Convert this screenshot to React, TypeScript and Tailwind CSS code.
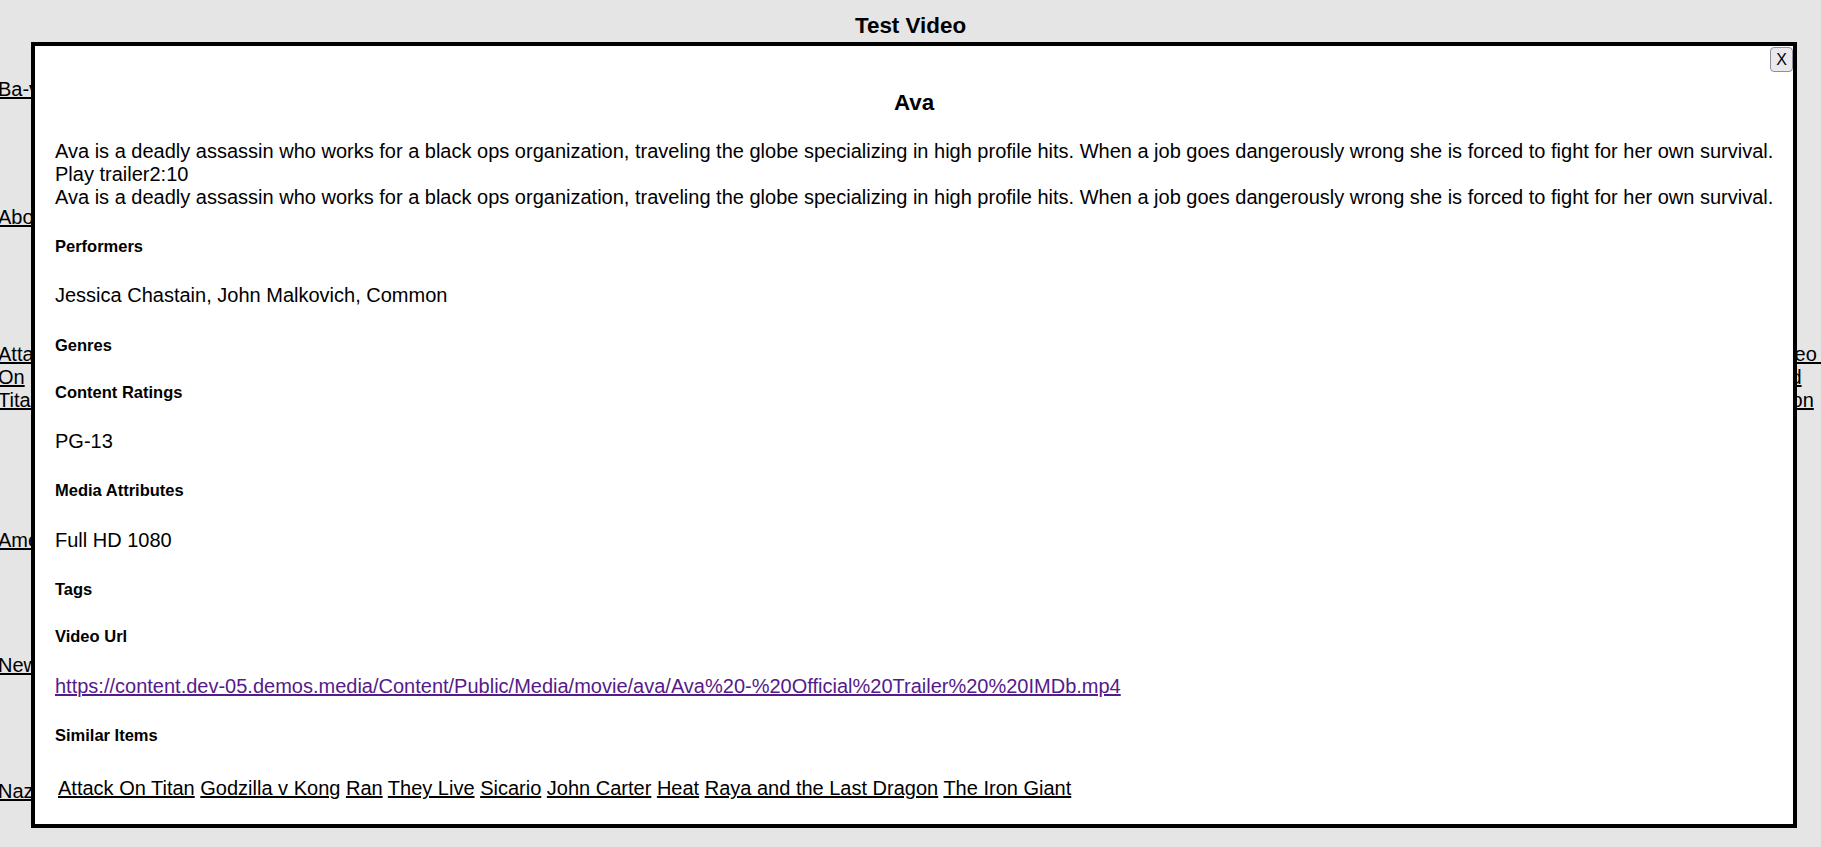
import React from "react";

const desc =
  "Ava is a deadly assassin who works for a black ops organization, traveling the globe specializing in high profile hits. When a job goes dangerously wrong she is forced to fight for her own survival.";

const similar = [
  "Attack On Titan",
  "Godzilla v Kong",
  "Ran",
  "They Live",
  "Sicario",
  "John Carter",
  "Heat",
  "Raya and the Last Dragon",
  "The Iron Giant",
];

function H5({ children }: { children: React.ReactNode }) {
  return <h5 className="text-[16.5px] leading-[19px] font-bold">{children}</h5>;
}

function Body({ children }: { children: React.ReactNode }) {
  return <p className="text-[20px] leading-[23px] whitespace-nowrap">{children}</p>;
}

export default function App() {
  return (
    <div
      className="relative w-full h-[847px] overflow-hidden bg-[#e5e5e5] text-black"
      style={{ fontFamily: '"Liberation Sans", Arial, sans-serif' }}
    >
      <h3 className="pt-[13px] text-center text-[22.4px] leading-[26px] font-bold">Test Video</h3>

      <div className="grid grid-cols-[60px_1fr_55px] text-[20px] leading-[23px]">
        <div className="-ml-[2px] flex flex-col items-start">
          <a href="#" className="mt-[39px] underline whitespace-nowrap">Ba-vaan</a>
          <a href="#" className="mt-[105.3px] underline whitespace-nowrap">About Time</a>
          <a href="#" className="mt-[113.7px] underline">Attack On Titan</a>
          <a href="#" className="mt-[116.6px] underline whitespace-nowrap">American Made</a>
          <a href="#" className="mt-[102.4px] underline whitespace-nowrap">New Mutants</a>
          <a href="#" className="mt-[103px] underline whitespace-nowrap">Nazi Hunters</a>
        </div>
        <div />
        <div className="flex flex-col items-start">
          <a href="#" className="mt-[304px] underline whitespace-nowrap">
            Video Game
            <br />
            And
            <br />
            Upon
          </a>
        </div>
      </div>

      <div className="fixed left-[31px] top-[42px] w-[1766px] h-[786px] border-4 border-black bg-white overflow-hidden">
        <button className="absolute top-[1px] right-0 h-[25px] px-[5px] text-[16px] leading-[20px] bg-[#e9e9ed] border border-[#8f8f9d] rounded-[4px] text-black">
          X
        </button>
        <div className="pl-[20px] pr-[4px] pt-[44px]">
          <h3 className="pr-[16px] text-center text-[22.4px] leading-[26px] font-bold">Ava</h3>
          <div className="mt-[24px]">
            <Body>{desc}</Body>
            <Body>Play trailer2:10</Body>
            <Body>{desc}</Body>
          </div>
          <div className="mt-[28px] flex flex-col gap-[28.3px]">
            <H5>Performers</H5>
            <Body>Jessica Chastain, John Malkovich, Common</Body>
            <H5>Genres</H5>
            <H5>Content Ratings</H5>
            <Body>PG-13</Body>
            <H5>Media Attributes</H5>
            <Body>Full HD 1080</Body>
            <H5>Tags</H5>
            <H5>Video Url</H5>
            <p className="text-[20px] leading-[23px]">
              <a href="#" className="underline text-[#551a8b]">
                https://content.dev-05.demos.media/Content/Public/Media/movie/ava/Ava%20-%20Official%20Trailer%20%20IMDb.mp4
              </a>
            </p>
            <H5>Similar Items</H5>
            <div className="mt-[4px] ml-[3px] text-[20px] leading-[23px]">
              {similar.map((s, i) => (
                <React.Fragment key={s}>
                  {i > 0 ? " " : ""}
                  <a href="#" className="underline">
                    {s}
                  </a>
                </React.Fragment>
              ))}
            </div>
          </div>
        </div>
      </div>
    </div>
  );
}
